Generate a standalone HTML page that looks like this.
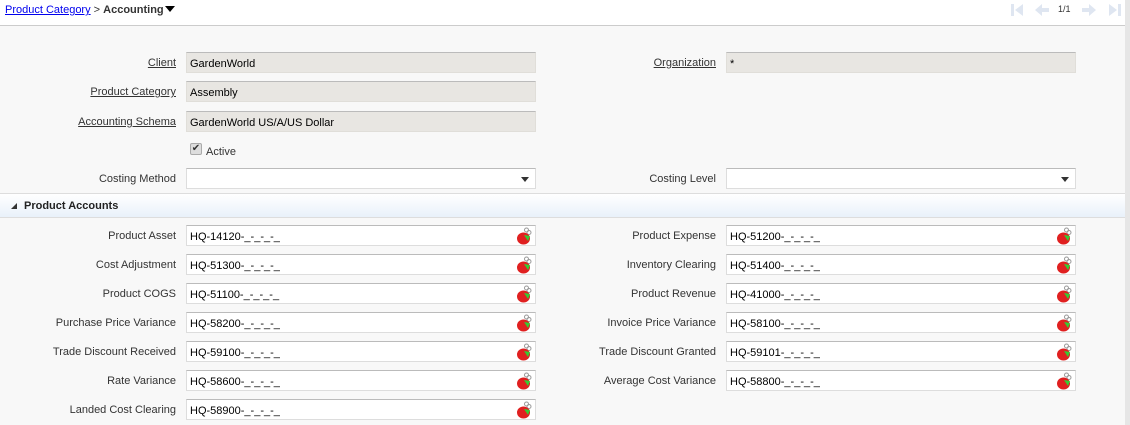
<!DOCTYPE html>
<html><head><meta charset="utf-8">
<style>
*{box-sizing:border-box;margin:0;padding:0}
body{width:1130px;height:425px;overflow:hidden;background:#f8f8f8;font-family:"Liberation Sans",sans-serif;font-size:11px;color:#333;position:relative}
.hdr{position:absolute;left:0;top:0;width:1125px;height:26px;background:#fff;border-bottom:1px solid #ccc}
.sb{position:absolute;right:0;top:0;width:5px;height:425px;background:#e6e6e6}
.bc{position:absolute;left:5px;top:4px;font-size:11px}
.bc a{color:#00e;text-decoration:underline}
.bc b{color:#333}
.pg{position:absolute;left:1058px;top:4px;font-size:9px;color:#333}
.l{position:absolute;text-align:right;width:300px;font-size:11px;color:#333}
.l u{color:#333}
.i{position:absolute;height:21px;background:#fff;border:1px solid #ddd;border-top-color:#bbb;padding:5px 3px 0;font-size:11px;color:#000;width:350px}
.ro{background:#e8e6e2;border-color:#e0ded9;border-top-color:#bbb}
.dd::after{content:"";position:absolute;right:6px;top:8px;border:4px solid transparent;border-top:5px solid #333;border-bottom:0}
.ic{position:absolute;right:2px;top:1px;width:17px;height:18px}
.sec{position:absolute;left:0;top:193px;width:1125px;height:25px;border-top:1px solid #ddd;border-bottom:1px solid #ddd;background:linear-gradient(#fff,#e9f1fa);font-weight:bold;font-size:11px;padding:6px 0 0 24px;color:#222}
.sec::before{content:"";position:absolute;left:11px;top:9px;border-right:6px solid #333;border-top:6px solid transparent}
</style></head><body>
<div class="hdr">
<div class="bc"><a>Product Category</a> &gt; <b>Accounting</b><span style="display:inline-block;width:0;height:0;border:5px solid transparent;border-top:6px solid #000;border-bottom:0;vertical-align:1px;margin-left:1px"></span></div>
<svg style="position:absolute;left:1008px;top:2px" width="115" height="16" viewBox="0 0 115 16" fill="#dfe6f1">
<rect x="3" y="2" width="3" height="12"/><path d="M15 2 L7 8 L15 14Z"/>
<path d="M27 8 L34 2 L34 6 L41 6 L41 10 L34 10 L34 14Z"/>
<path d="M88 8 L81 2 L81 6 L74 6 L74 10 L81 10 L81 14Z"/>
<path d="M101 2 L109 8 L101 14Z"/><rect x="110" y="2" width="3" height="12"/>
</svg>
<div class="pg">1/1</div>
</div>
<div class="sb"></div>

<div class="l" style="left:-124px;top:57px"><u>Client</u></div>
<div class="i ro" style="left:186px;top:52px">GardenWorld</div>
<div class="l" style="left:416px;top:57px"><u>Organization</u></div>
<div class="i ro" style="left:726px;top:52px">*</div>
<div class="l" style="left:-124px;top:86px"><u>Product Category</u></div>
<div class="i ro" style="left:186px;top:81px">Assembly</div>
<div class="l" style="left:-124px;top:116px"><u>Accounting Schema</u></div>
<div class="i ro" style="left:186px;top:111px">GardenWorld US/A/US Dollar</div>
<div style="position:absolute;left:190px;top:143px;width:12px;height:12px;border:1px solid #aaa;border-radius:2px;background:#ddd;font-size:10px;line-height:10px;text-align:center;color:#333">✔</div>
<div style="position:absolute;left:206px;top:146px">Active</div>
<div class="l" style="left:-124px;top:173px">Costing Method</div>
<div class="i dd" style="left:186px;top:168px"></div>
<div class="l" style="left:416px;top:173px">Costing Level</div>
<div class="i dd" style="left:726px;top:168px"></div>

<div class="sec">Product Accounts</div>

<svg width="0" height="0" style="position:absolute"><defs><symbol id="ac" viewBox="0 0 17 18"><circle cx="10.5" cy="3" r="2" fill="none" stroke="#999" stroke-width="1"/><circle cx="13" cy="5.5" r="2" fill="none" stroke="#999" stroke-width="1"/><ellipse cx="7.5" cy="11.5" rx="6.5" ry="6" fill="#e02020"/><path d="M8 8 L14 9 L12 14 Z" fill="#3c3"/></symbol></defs></svg>

<div id="rows"></div>
<script>
var L=[["Product Asset","HQ-14120-_-_-_-_","Product Expense","HQ-51200-_-_-_-_"],["Cost Adjustment","HQ-51300-_-_-_-_","Inventory Clearing","HQ-51400-_-_-_-_"],["Product COGS","HQ-51100-_-_-_-_","Product Revenue","HQ-41000-_-_-_-_"],["Purchase Price Variance","HQ-58200-_-_-_-_","Invoice Price Variance","HQ-58100-_-_-_-_"],["Trade Discount Received","HQ-59100-_-_-_-_","Trade Discount Granted","HQ-59101-_-_-_-_"],["Rate Variance","HQ-58600-_-_-_-_","Average Cost Variance","HQ-58800-_-_-_-_"],["Landed Cost Clearing","HQ-58900-_-_-_-_"]];
var h="";L.forEach(function(r,k){var y=225+29*k;
h+='<div class="l" style="left:-124px;top:'+(y+5)+'px">'+r[0]+'</div><div class="i" style="left:186px;top:'+y+'px">'+r[1]+'<svg class="ic" viewBox="0 0 17 18"><use href="#ac"/></svg></div>';
if(r[2])h+='<div class="l" style="left:416px;top:'+(y+5)+'px">'+r[2]+'</div><div class="i" style="left:726px;top:'+y+'px">'+r[3]+'<svg class="ic" viewBox="0 0 17 18"><use href="#ac"/></svg></div>';});
document.getElementById("rows").innerHTML=h;
</script>
</body></html>
